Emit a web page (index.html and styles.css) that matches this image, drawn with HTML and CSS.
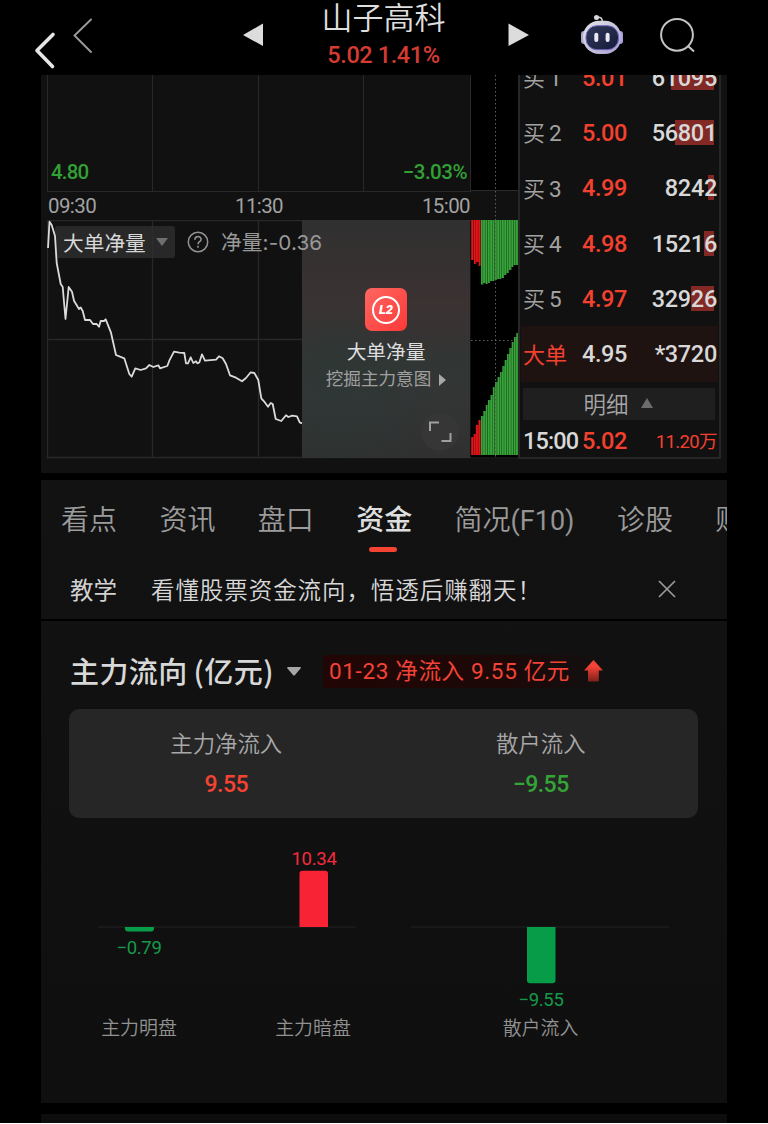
FILE: index.html
```html
<!DOCTYPE html>
<html lang="zh-CN">
<head>
<meta charset="utf-8">
<title>山子高科</title>
<link rel="stylesheet" href="styles.css">
</head>
<body>
<div class="page">
  <svg class="outer-back" width="24" height="40" viewBox="0 0 24 40"><path d="M20 4.5 4 20.500 19.500 36.500" fill="none" stroke="#e6e6e6" stroke-width="3.600" stroke-linecap="round" stroke-linejoin="round"/></svg>
  <div class="screen">
    <header class="header">
      <svg class="header-icons" width="686" height="75" viewBox="41 0 686 75">
        <defs>
          <linearGradient id="shell" x1="0" y1="0" x2="1" y2="1"><stop offset="0" stop-color="#e4e4e8"/><stop offset=".6" stop-color="#c2bfd8"/><stop offset="1" stop-color="#a39bd6"/></linearGradient>
          <linearGradient id="face" x1="0" y1="0" x2="1" y2="1"><stop offset="0" stop-color="#303858"/><stop offset="1" stop-color="#151b3b"/></linearGradient>
        </defs>
        <path d="M91 19.500 74.500 35.500 91 52" fill="none" stroke="#9b9b9b" stroke-width="1.900" stroke-linecap="round"/>
        <path d="M243 35 263 23.500V46z" fill="#dcdcdc"/>
        <path d="M529 35 508.500 23.500V46z" fill="#dcdcdc"/>
        <path d="M597 17.500Q602 16 602.500 22" fill="none" stroke="#d5d5dc" stroke-width="1.500"/>
        <circle cx="596.500" cy="17.500" r="2.500" fill="#d9d9df"/>
        <rect x="581" y="31" width="6" height="13" rx="3" fill="#aaa8c4"/>
        <rect x="617" y="31" width="6" height="13" rx="3" fill="#aaa0dc"/>
        <rect x="583" y="20.700" width="38" height="33.300" rx="16" fill="url(#shell)"/>
        <rect x="586" y="25.700" width="32.500" height="24" rx="11" fill="url(#face)" stroke="#7468c4" stroke-width="1"/>
        <rect x="594.300" y="32.700" width="4" height="9.300" rx="2" fill="#e9e9f2"/>
        <rect x="605.600" y="32.700" width="4" height="9.300" rx="2" fill="#e9e9f2"/>
        <circle cx="677" cy="34.800" r="15.900" fill="none" stroke="#c4c4c4" stroke-width="2"/>
        <path d="M688 46 694 51.500" stroke="#c4c4c4" stroke-width="2"/>
      </svg>
      <div class="stock">
        <div class="stock-name">山子高科</div>
        <div class="stock-price">5.02 1.41%</div>
      </div>
    </header>

    <section class="quote">
      <div class="charts">
        <div class="price-plot"><span class="low">4.80</span><span class="low">−3.03%</span></div>
        <div class="time-axis"><span>09:30</span><span>11:30</span><span>15:00</span></div>
        <div class="flow-plot">
          <svg class="layer" width="424" height="239" viewBox="47 220 424 239">
            <path d="M47.500 459V220.500H471M152.500 220V458M258.500 220V458M47 339.500H302M47 457.500H471" fill="none" stroke="#282828" stroke-width="1.300"/>
          </svg>
          <div class="layer flow-head">
            <span class="select">大单净量<svg width="12" height="8" viewBox="0 0 12 8"><path d="M0 0H12L6 8z" fill="#6f6f6f"/></svg></span>
            <svg width="22" height="22" viewBox="0 0 22 22"><circle cx="11" cy="11" r="9.700" fill="none" stroke="#929292" stroke-width="1.500"/><path d="M7.900 8.800C7.900 4.500 14.200 4.600 14.100 8.500 14 10.800 11 10.700 11 13.300M11 14.800V16.700" fill="none" stroke="#929292" stroke-width="1.600"/></svg>
          </div>
          <svg class="layer" width="424" height="239" viewBox="47 220 424 239">
            <path d="M48 248 49.500 221.700 51.700 225 55 236 56.700 263 60.700 284 62.700 287 65.500 319 68.700 287 72 291.700 74 300.700 79 309 80.700 307.500 82.700 311 85 320 90 320 93 324 96.700 324 99 326.700 100.700 321 104 321 105.700 319.300 111 332.700 116 355 120 356.700 124.300 358.300 129.300 374 131.700 376.700 135.300 368.300 140.700 370 146 368.300 149.300 365 153.300 367 158.300 365.300 160 368.300 167.300 366 169.300 360.700 174 351.700 179.300 352.700 184.300 353 186 363.300 188 363.300 190.700 357.300 193.300 363 196 361.300 197.300 363.300 199.300 362.500 202 354.300 205 360.700 216 359.700 219 356.300 222.700 358.300 226 364 230 375.300 236 377.700 242 381.300 246 378 250.700 372.300 254.300 373 258.300 380 261.300 398.300 264 401.300 268 406.700 270.700 403 272.700 404 275.700 419 281.300 421 286 415.300 288.300 417 292.300 415.700 297 416.300 299.700 422.300 302 423.300" fill="none" stroke="#dadada" stroke-width="1.800" stroke-linejoin="round"/>
          </svg>
          <div class="layer promo">
            <div class="l2"><span>L2</span></div>
            <div class="promo-title">大单净量</div>
            <div class="promo-sub">挖掘主力意图<svg width="7" height="12" viewBox="0 0 7 12"><path d="M0 0 7 6 0 12z" fill="#a8a8a8"/></svg></div>
            <svg class="expand" width="38" height="38" viewBox="0 0 38 38"><circle cx="19" cy="19" r="19" fill="#363636"/><path d="M9 18V9.500H18M20.500 28H29.500V20" fill="none" stroke="#a0a0a0" stroke-width="2"/></svg>
          </div>
          <span class="layer net">净量:-0.36</span>
        </div>
      </div>

      <svg class="depth" width="47" height="384" viewBox="471 75 47 384">
        <defs>
          <pattern id="stripe" x="471.500" y="0" width="2.350" height="10" patternUnits="userSpaceOnUse"><rect x="1.700" width=".65" height="10" fill="#000" fill-opacity=".5"/></pattern>
        </defs>
        <path d="M471 75H519V191H471zM471 220H519V459H471z" fill="#000"/>
        <path d="M471 190.500H519M471 458H519" stroke="#2a2a2a"/>
        <path d="M471 220H481V266H478.600V262H476.300V264H474V260H471z" fill="#e4161a"/>
        <path d="M481 220H518V265H513.500V267H511.500V270H509V273H506.500V275H504V278H501.500V279H497V280H494.500V281H490V283H488V284H485.500V283H483.500V284.500H481z" fill="#38a53a"/>
        <path d="M471 455V437H473.500V434H475.800V425H478.300V420H481V455z" fill="#e4161a"/>
        <path d="M481 455V416H483.300V411H485.700V405H488V400H490.500V395H492.800V387H495V382H497.500V377H500V372H502.300V366H504.600V360H507V354H509.300V348H511.600V342H514V337H516.300V333H518V455z" fill="#38a53a"/>
        <path d="M471 220H518V284.500H471zM471 333H518V455H471z" fill="url(#stripe)"/>
        <path d="M495.500 75V459M471 340.500H516" fill="none" stroke="#5d5d5d" stroke-width="1" stroke-dasharray="1.500 2.500"/>
      </svg>

      <div class="book">
        <div class="level"><span class="side">买<b>1</b></span><span class="bid">5.01</span><span class="vol"><i class="fill w43"></i>61095</span></div>
        <div class="level"><span class="side">买<b>2</b></span><span class="bid">5.00</span><span class="vol"><i class="fill w39"></i>56801</span></div>
        <div class="level"><span class="side">买<b>3</b></span><span class="bid">4.99</span><span class="vol"><i class="fill w6"></i>8242</span></div>
        <div class="level"><span class="side">买<b>4</b></span><span class="bid">4.98</span><span class="vol"><i class="fill w10"></i>15216</span></div>
        <div class="level"><span class="side">买<b>5</b></span><span class="bid">4.97</span><span class="vol"><i class="fill w23"></i>32926</span></div>
        <div class="level big"><span class="side">大单</span><span class="bid">4.95</span><span class="vol">*3720</span></div>
        <div class="detail">明细<svg width="12" height="10" viewBox="0 0 12 10"><path d="M6 0 12 10H0z" fill="#6c6c6c"/></svg></div>
        <div class="trade"><span class="time">15:00</span><span class="bid">5.02</span><span class="amount">11.20万</span></div>
      </div>
    </section>

    <section class="funds">
      <nav class="tabs"><span>看点</span><span>资讯</span><span>盘口</span><span class="active">资金<i></i></span><span class="f10">简况<b>(F10)</b></span><span>诊股</span><span>财务</span></nav>
      <div class="lesson">
        <span class="lesson-tag">教学</span><span class="lesson-text">看懂股票资金流向，悟透后赚翻天！</span>
        <svg width="18" height="18" viewBox="0 0 18 18"><path d="M1 1 17 17M17 1 1 17" stroke="#9b9b9b" stroke-width="1.700"/></svg>
      </div>
      <div class="flow-title">
        <h2>主力流向<span>(亿元)</span></h2>
        <svg class="caret" width="14" height="9" viewBox="0 0 14 9"><path d="M1 0H13Q14.500 0 13.500 1.500L8 8Q7 9 6 8L.5 1.500Q-.5 0 1 0z" fill="#a6a6a6"/></svg>
        <div class="badge"><span>01-23 净流入 9.55 亿元</span><svg width="19" height="22" viewBox="0 0 19 22"><defs><linearGradient id="up" x1="0" y1="0" x2="0" y2="1"><stop offset=".3" stop-color="#f44336"/><stop offset="1" stop-color="#7d211b"/></linearGradient></defs><path d="M9.500 0 19 10.500H14.800V21.500H4V10.500H0z" fill="url(#up)"/></svg></div>
      </div>
      <div class="card">
        <div><p>主力净流入</p><strong>9.55</strong></div>
        <div><p>散户流入</p><strong class="down">−9.55</strong></div>
      </div>
      <svg class="bars" width="686" height="285" viewBox="41 818 686 285">
        <path d="M98 927H356M411 927H669" stroke="#1c1c1c" stroke-width="1.300"/>
        <path d="M125 927H154V928.500Q154 931.500 151 931.500H128Q125 931.500 125 928.500z" fill="#079c48"/>
        <path d="M299.500 927V873.500Q299.500 870.700 302.500 870.700H325Q328 870.700 328 873.500V927z" fill="#f92336"/>
        <path d="M527 927H555.500V980Q555.500 983.300 552.500 983.300H530Q527 983.300 527 980z" fill="#079c48"/>
        <g class="bar-value" text-anchor="middle">
          <text x="314" y="865.300" fill="#f52b3c">10.34</text>
          <text x="139" y="954.300" fill="#159a4a">−0.79</text>
          <text x="541" y="1006.200" fill="#159a4a">−9.55</text>
        </g>
        <g class="bar-label" text-anchor="middle">
          <text x="139" y="1034.800">主力明盘</text>
          <text x="313" y="1034.800">主力暗盘</text>
          <text x="540.500" y="1034.800">散户流入</text>
        </g>
      </svg>
    </section>
    <section class="next"></section>
  </div>
</div>
</body>
</html>
```
FILE: styles.css
```css
* { box-sizing: border-box; }
html { background: #fff; }
body { margin: 0; font-family: Roboto, "Noto Sans CJK SC", sans-serif; color: #d8d8d8; }
svg { display: block; flex: none; }
p, h2 { margin: 0; }

.page { position: relative; width: 768px; height: 1123px; background: #000; overflow: hidden; }
.outer-back { position: absolute; left: 33px; top: 30px; z-index: 2; }
.screen { width: 686px; height: 1123px; margin-left: 41px; display: flex; flex-direction: column; }

.header { height: 75px; display: grid; flex: none; }
.header-icons, .stock { grid-area: 1 / 1; }
.stock { text-align: center; white-space: nowrap; padding-right: 1px; }
.stock-name { height: 36px; line-height: 38px; font-size: 31px; font-weight: 350; color: #dedede; }
.stock-price { height: 38px; line-height: 38px; font-size: 23.5px; font-weight: 500; letter-spacing: -.4px; color: #d43b31; }

.quote { height: 398px; flex: none; display: flex; align-items: flex-start; padding-left: 6px; background: #111; overflow: hidden; }
.charts { width: 424px; }
.price-plot {
  height: 117px; display: flex; justify-content: space-between; align-items: flex-end; padding: 0 3px 7px 3px;
  border: solid #282828; border-width: 0 1px 1px;
  background: linear-gradient(#282828, #282828) 104px 0 / 1px 100% no-repeat, linear-gradient(#282828, #282828) 210px 0 / 1px 100% no-repeat, linear-gradient(#282828, #282828) 315px 0 / 1px 100% no-repeat;
}
.low { font-size: 20.5px; line-height: 23px; font-weight: 500; letter-spacing: -.8px; color: #31a035; }
.low + .low { letter-spacing: -.5px; }
.time-axis { height: 28px; display: flex; justify-content: space-between; align-items: center; font-size: 20.5px; line-height: 26px; letter-spacing: -.6px; color: #a2a2a2; padding: 0 1px 1px; }

.flow-plot { height: 239px; display: grid; }
.layer { grid-area: 1 / 1; }
.flow-head { display: flex; align-items: center; gap: 12px; height: 32px; margin: 6px 0 0 8px; }
.select { width: 120px; height: 32px; padding-left: 8px; display: flex; align-items: center; gap: 10px; border-radius: 3px; background: rgba(46, 46, 46, .8); font-size: 20.7px; white-space: nowrap; }
.net { z-index: 1; margin: 7px 0 0 174px; height: 32px; line-height: 32px; font-size: 20.7px; color: #999; letter-spacing: .1px; font-family: Inter, "Noto Sans CJK SC", sans-serif; }
.promo {
  margin-left: 255px; width: 168px; height: 238px; padding-top: 68px; position: relative;
  display: flex; flex-direction: column; align-items: center;
  background: radial-gradient(ellipse at 20% 73%, rgba(42, 57, 54, .5), transparent 50%), linear-gradient(#303030, #3b3232 35%, #363333 48%, #313634 60%, #333535 75%, #303030);
}
.l2 { width: 42px; height: 43px; border-radius: 7px; background: linear-gradient(135deg, #ff6661, #fa3a38); display: grid; place-items: center; }
.l2 span { width: 28px; height: 28px; border: 2px solid #fff; border-radius: 50%; font: italic 900 13px/24px Roboto, sans-serif; text-align: center; color: #fff; }
.promo-title { margin-top: 7px; font-size: 19.7px; line-height: 30px; color: #dedede; }
.promo-sub { display: flex; align-items: center; gap: 8px; font-size: 17.6px; line-height: 23px; color: #a0a0a0; white-space: nowrap; }
.expand { position: absolute; right: 11px; bottom: 7px; }

.book { width: 203px; height: 384px; padding: 0 1px; border: solid #262626; border-width: 0 2px 2px; overflow: hidden; }
.level { height: 55.300px; padding: 0 1px 0 2px; display: flex; align-items: center; font-size: 23.5px; font-weight: 500; white-space: nowrap; }
.level:first-child { margin-top: -25px; }
.side { width: 59px; padding-bottom: 3px; font-size: 22px; font-weight: 350; color: #a2a2a2; }
.side b { margin-left: 4px; font-size: 22.5px; font-weight: 400; }
.bid { width: 60px; letter-spacing: -.4px; color: #f4402f; }
.vol { flex: 1; position: relative; text-align: right; letter-spacing: -.3px; z-index: 0; }
.fill { position: absolute; z-index: -1; right: 3px; top: 1px; height: 25px; background: #822925; }
.w43 { width: 43px; } .w39 { width: 39px; } .w6 { width: 6px; } .w10 { width: 10px; } .w23 { width: 23px; }
.big { background: #1f1312; }
.big .side { color: #f4402f; font-weight: 400; }
.big .bid { color: #d8d8d8; }
.detail { height: 32px; margin: 6px 3px 0 2px; padding: 0 2px 2px 0; display: flex; align-items: center; justify-content: center; gap: 12px; background: #1f1f1f; font-size: 22.500px; font-weight: 350; color: #a6a6a6; }
.trade { height: 43px; display: flex; align-items: center; padding: 0 1px 0 2px; font-size: 23.5px; font-weight: 500; white-space: nowrap; }
.time { width: 59px; letter-spacing: -.9px; }
.amount { flex: 1; padding-bottom: 2px; text-align: right; font-size: 18.500px; font-weight: 400; color: #f4402f; letter-spacing: -.6px; }

.funds { height: 623px; flex: none; margin-top: 7px; background: linear-gradient(#121212, #0f0f0f); overflow: hidden; }
.tabs { height: 80px; padding: 0 0 0 20px; display: flex; gap: 42.400px; font-size: 28px; line-height: 81px; font-weight: 350; color: #9c9c9c; white-space: nowrap; overflow: hidden; }
.tabs span { flex: none; width: 56px; }
.tabs .f10 { width: 120px; }
.tabs b { font-size: 27px; font-weight: 400; color: #949494; }
.tabs .active { position: relative; font-weight: 500; color: #dedede; }
.tabs i { position: absolute; left: 13px; top: 67px; width: 28px; height: 5px; border-radius: 3px; background: #f44332; }
.lesson { height: 61px; padding: 0 51px 2px 29px; display: flex; align-items: center; font-size: 23.500px; color: #d2d2d2; border-bottom: 2px solid #000; white-space: nowrap; }
.lesson-tag { width: 81px; }
.lesson-text { flex: 1; letter-spacing: .93px; font-weight: 350; color: #d8d8d8; }
.flow-title { height: 88px; padding: 12px 0 0 29px; display: flex; align-items: center; }
.flow-title h2 { width: 217px; font-size: 29px; font-weight: 500; line-height: 40px; letter-spacing: .4px; white-space: nowrap; }
.flow-title h2 span { margin-left: 6px; font-family: "Noto Sans CJK SC", sans-serif; }
.badge { margin-left: 22px; width: 289px; height: 33px; padding: 0 0 4px 6px; display: flex; align-items: center; gap: 14px; border-radius: 3px; background: linear-gradient(90deg, #210605, #1b0908 65%, transparent); font-size: 22.5px; letter-spacing: .65px; color: #f44336; white-space: nowrap; }
.badge svg { margin-top: 3px; }
.card { height: 109px; margin: 0 29px 0 28px; display: grid; grid-template-columns: 1fr 1fr; border-radius: 10px; background: #262626; text-align: center; }
.card p { margin-top: 18px; font-size: 22.400px; line-height: 34px; font-weight: 350; color: #a8a8a8; }
.card strong { display: block; font-size: 23px; line-height: 47px; font-weight: 500; letter-spacing: -.5px; color: #f44332; }
.card .down { color: #33a537; }
.bar-value { font-size: 18.500px; letter-spacing: -.3px; }
.bar-label { font-size: 18.900px; font-weight: 350; fill: #929292; }
.next { height: 10px; margin-top: 11px; background: #0d0d0d; }
```
